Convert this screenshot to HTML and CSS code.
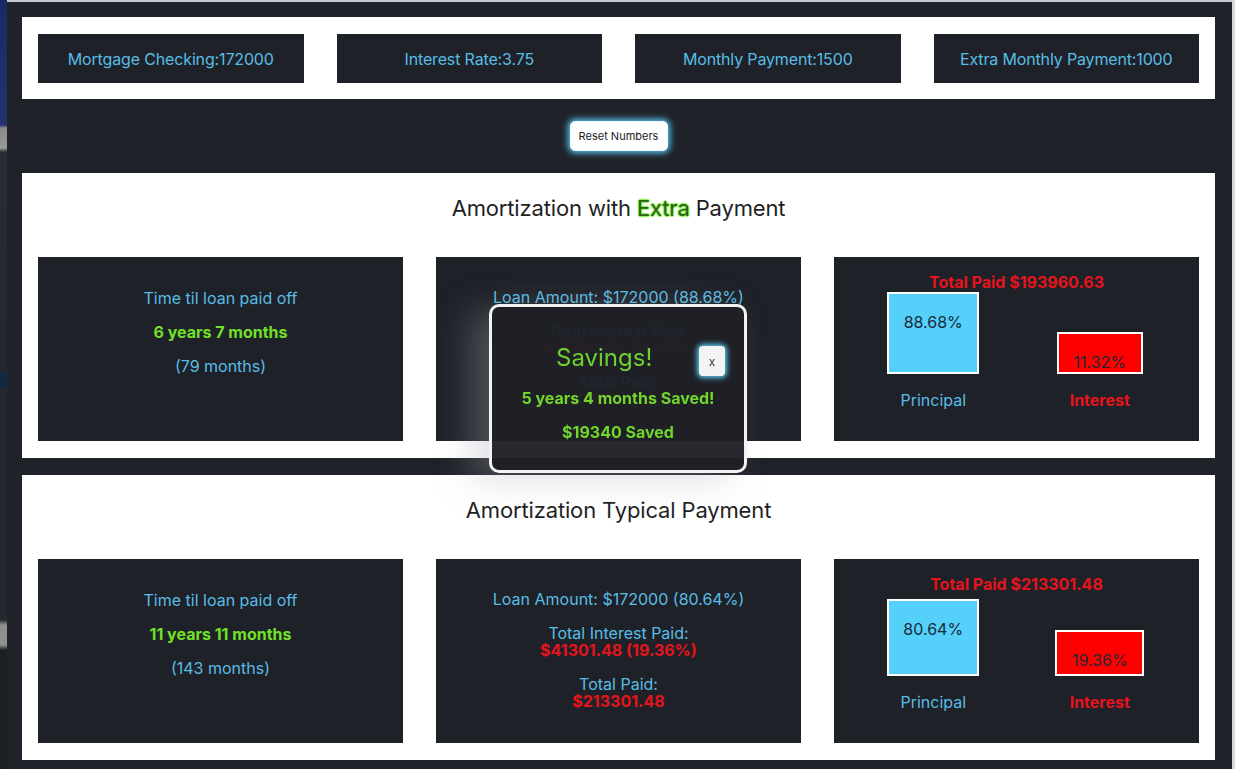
FILE: index.html
```html
<!DOCTYPE html>
<html lang="en">
<head>
<meta charset="utf-8">
<title>Mortgage Amortization</title>
<link rel="stylesheet" href="styles.css">
</head>
<body>
<div class="side-strip"></div>
<div class="app">
  <div class="inputs">
    <div class="input-box">Mortgage Checking:172000</div>
    <div class="input-box">Interest Rate:3.75</div>
    <div class="input-box">Monthly Payment:1500</div>
    <div class="input-box">Extra Monthly Payment:1000</div>
  </div>
  <div class="reset-row"><button class="reset-btn">Reset Numbers</button></div>

  <section class="section">
    <h2 class="section-title">Amortization with <span class="extra">Extra</span> Payment</h2>
    <div class="cards">
      <div class="card card-time">
        <div class="line cyan">Time til loan paid off</div>
        <div class="line green bold">6 years 7 months</div>
        <div class="line cyan">(79 months)</div>
      </div>
      <div class="card card-totals">
        <div class="group cyan">Loan Amount: $172000 (88.68%)</div>
        <div class="group"><div class="cyan">Total Interest Paid:</div><div class="red bold">$21960.63 (11.32%)</div></div>
        <div class="group"><div class="cyan">Total Paid:</div><div class="red bold">$193960.63</div></div>
      </div>
      <div class="card card-chart">
        <div class="chart-title">Total Paid $193960.63</div>
        <div class="chart">
          <div class="col">
            <div class="bars"><div class="bar bar-principal" style="height:82px">88.68%</div></div>
            <div class="label cyan">Principal</div>
          </div>
          <div class="col">
            <div class="bars"><div class="bar bar-interest" style="height:42px">11.32%</div></div>
            <div class="label red bold">Interest</div>
          </div>
        </div>
      </div>
    </div>
  </section>

  <section class="section">
    <h2 class="section-title">Amortization Typical Payment</h2>
    <div class="cards">
      <div class="card card-time">
        <div class="line cyan">Time til loan paid off</div>
        <div class="line green bold">11 years 11 months</div>
        <div class="line cyan">(143 months)</div>
      </div>
      <div class="card card-totals">
        <div class="group cyan">Loan Amount: $172000 (80.64%)</div>
        <div class="group"><div class="cyan">Total Interest Paid:</div><div class="red bold">$41301.48 (19.36%)</div></div>
        <div class="group"><div class="cyan">Total Paid:</div><div class="red bold">$213301.48</div></div>
      </div>
      <div class="card card-chart">
        <div class="chart-title">Total Paid $213301.48</div>
        <div class="chart">
          <div class="col">
            <div class="bars"><div class="bar bar-principal" style="height:77px">80.64%</div></div>
            <div class="label cyan">Principal</div>
          </div>
          <div class="col">
            <div class="bars"><div class="bar bar-interest wide" style="height:46px">19.36%</div></div>
            <div class="label red bold">Interest</div>
          </div>
        </div>
      </div>
    </div>
  </section>
</div>
<div class="right-edge"></div>

<div class="modal">
  <div class="modal-head">
    <span class="modal-title">Savings!</span>
    <button class="close-btn">x</button>
  </div>
  <div class="modal-line">5 years 4 months Saved!</div>
  <div class="modal-line">$19340 Saved</div>
</div>
</body>
</html>
```

FILE: styles.css
```css
html, body {
  margin: 0;
  padding: 0;
  height: 769px;
  overflow: hidden;
  background: #202229;
  font-family: Inter, "Noto Sans", "Liberation Sans", sans-serif;
}
body {
  display: flex;
}
.side-strip {
  width: 7px;
  flex: none;
  background: linear-gradient(180deg, #1a2a63 0, #22336e 125px, #8a8a8a 128px, #9a9a9a 148px, #2a2c32 152px, #25272d 370px, #0f2a44 372px, #0f2a44 388px, #26282e 390px, #26282e 620px, #8f8f8f 625px, #8f8f8f 645px, #1d1e22 650px, #1d1e22 100%);
}
.right-edge {
  width: 3px;
  flex: none;
  background: #d8d8dc;
}
.app {
  flex: 1;
  min-width: 0;
  border-top: 2px solid #c9cacf;
  padding: 15px 17px 0 15px;
  display: flex;
  flex-direction: column;
}
.app > * {
  flex-shrink: 0;
}
.inputs {
  background: #fff;
  display: grid;
  grid-template-columns: repeat(4, 1fr);
  gap: 33px;
  padding: 17px 16px 16px;
}
.input-box {
  height: 49px;
  background: #1f2128;
  color: #58bde4;
  font-size: 16px;
  letter-spacing: -0.15px;
  display: flex;
  align-items: center;
  justify-content: center;
}
.reset-row {
  height: 74px;
  display: flex;
  align-items: center;
  justify-content: center;
}
.reset-btn {
  width: 98px;
  height: 30px;
  background: #fff;
  border: 1px solid #e6f6ff;
  border-radius: 5px;
  box-shadow: 0 0 6px 2px #55c8f2;
  font-family: Inter, "Noto Sans", sans-serif;
  font-size: 11px;
  color: #222;
  padding: 0;
}
.section {
  background: #fff;
  padding: 20px 16px 17px;
  margin-bottom: 17px;
}
.section-title {
  margin: 0;
  height: 30px;
  line-height: 30px;
  text-align: center;
  font-size: 22px;
  font-weight: 400;
  letter-spacing: -0.15px;
  color: #1f1f1f;
}
.extra {
  color: #2f5f1a;
  text-shadow: 1px 0 1px #7cf23a, -1px 0 1px #7cf23a, 0 1px 1px #7cf23a, 0 -1px 1px #7cf23a;
}
.cards {
  margin-top: 34px;
  display: grid;
  grid-template-columns: repeat(3, 1fr);
  gap: 33px;
}
.card {
  height: 184px;
  min-width: 0;
  background: #1f2128;
  box-sizing: border-box;
  text-align: center;
  font-size: 16px;
}
.cyan { color: #58bde4; }
.green { color: #72e027; }
.red { color: #e4141c; }
.bold { font-weight: 700; }

.card-time {
  padding-top: 31px;
  display: flex;
  flex-direction: column;
  gap: 14px;
}
.card-time .line {
  line-height: 20px;
}
.card-totals {
  padding-top: 32px;
  display: flex;
  flex-direction: column;
  gap: 17px;
  line-height: 17px;
}
.card-chart {
  padding: 15px 16px 0;
}
.chart-title {
  line-height: 20px;
  font-weight: 700;
  color: #e4141c;
}
.chart {
  display: grid;
  grid-template-columns: 1fr 1fr;
}
.col {
  display: flex;
  flex-direction: column;
  align-items: center;
}
.bars {
  height: 82px;
  display: flex;
  align-items: flex-end;
}
.bar {
  box-sizing: border-box;
  border: 2px solid #fff;
  padding-top: 19px;
  line-height: 18px;
  font-size: 16px;
  color: #1b2a38;
  overflow: hidden;
}
.bar-principal {
  width: 92px;
  background: #55d0fa;
}
.bar-interest {
  width: 86px;
  background: #ff0000;
}
.bar-interest.wide {
  width: 89px;
}
.label {
  margin-top: 16px;
  line-height: 20px;
}

.modal {
  position: fixed;
  left: 489px;
  top: 304px;
  width: 258px;
  height: 169px;
  box-sizing: border-box;
  border: 3px solid #f2f2f2;
  border-radius: 10px;
  background: rgba(30, 32, 38, 0.96);
  box-shadow: -18px 8px 36px rgba(170, 172, 180, 0.35);
  text-align: center;
}
.modal-head {
  margin-top: 39px;
  height: 30px;
  display: flex;
  align-items: center;
  justify-content: space-between;
  padding: 0 19px 0 64px;
}
.modal-title {
  font-size: 24px;
  color: #6ed12f;
  position: relative;
  top: -4px;
}
.close-btn {
  width: 26px;
  height: 30px;
  padding: 0;
  background: #f1f3f5;
  border: none;
  border-radius: 4px;
  box-shadow: 0 0 5px 2px #5bc8f0;
  font-family: Inter, "Noto Sans", sans-serif;
  font-size: 12px;
  color: #333;
}
.modal-line {
  margin-top: 12px;
  line-height: 20px;
  font-size: 16px;
  font-weight: 700;
  color: #72d62a;
}
.modal-line + .modal-line {
  margin-top: 14px;
}
```
